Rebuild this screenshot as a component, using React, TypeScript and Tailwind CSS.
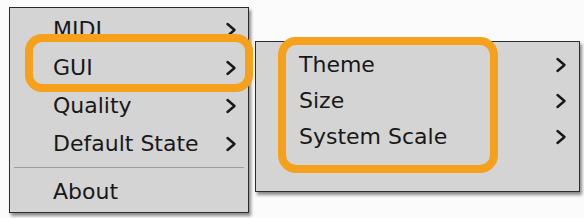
import React from 'react';

const font = { fontFamily: '"DejaVu Sans", Verdana, sans-serif' };

const Chevron: React.FC = () => (
    <svg width="12" height="16" viewBox="0 0 12 16" fill="none" className="shrink-0">
        <polyline points="2.5,2 9.5,8 2.5,14" stroke="#181818" strokeWidth="2.4" strokeLinecap="round" strokeLinejoin="round" />
    </svg>
);

interface ItemProps {
    label: string;
    sub?: boolean;
    h: string;
}

const Item: React.FC<ItemProps> = ({ label, sub, h }) => (
    <div className={`flex items-center justify-between pl-[43px] pr-[11px] ${h}`}>
        <span className="text-[22px] text-[#181818] leading-none whitespace-nowrap">{label}</span>
        {sub && <Chevron />}
    </div>
);

const App: React.FC = () => {
    return (
        <div className="relative w-[584px] h-[218px] bg-[#fbfbfb] overflow-hidden" style={font}>
            <div className="flex items-start gap-[6px] pl-[9px] pt-[7px]">
                {/* Main menu */}
                <div className="w-[240px] h-[206px] flex flex-col bg-[#d4d4d4] border border-[#2c2c2c] pt-[3px] shadow-[2px_3px_3px_rgba(0,0,0,0.45)]">
                    <Item label="MIDI" sub h="h-[38px]" />
                    <Item label="GUI" sub h="h-[38px]" />
                    <Item label="Quality" sub h="h-[38px]" />
                    <Item label="Default State" sub h="h-[38px]" />
                    <div className="h-[10px] flex items-center px-[4px]">
                        <div className="w-full h-[2px] border-t border-[#9c9c9c] border-b-white/60" />
                    </div>
                    <Item label="About" h="h-[38px]" />
                </div>

                {/* GUI submenu */}
                <div className="mt-[34px] w-[325px] h-[151px] flex flex-col bg-[#d4d4d4] border border-[#2c2c2c] pt-[5px] shadow-[2px_3px_3px_rgba(0,0,0,0.45)]">
                    <div className="pr-[1px]">
                        <Item label="Theme" sub h="h-[36px]" />
                        <Item label="Size" sub h="h-[36px]" />
                        <Item label="System Scale" sub h="h-[36px]" />
                    </div>
                </div>
            </div>

            {/* Annotation highlights */}
            <div className="absolute left-[25px] top-[34px] w-[228px] h-[58px] border-[8px] border-[#f6a11c] rounded-[17px] pointer-events-none" />
            <div className="absolute left-[278px] top-[37px] w-[220px] h-[136px] border-[8px] border-[#f6a11c] rounded-[18px] pointer-events-none" />
        </div>
    );
};

export default App;
